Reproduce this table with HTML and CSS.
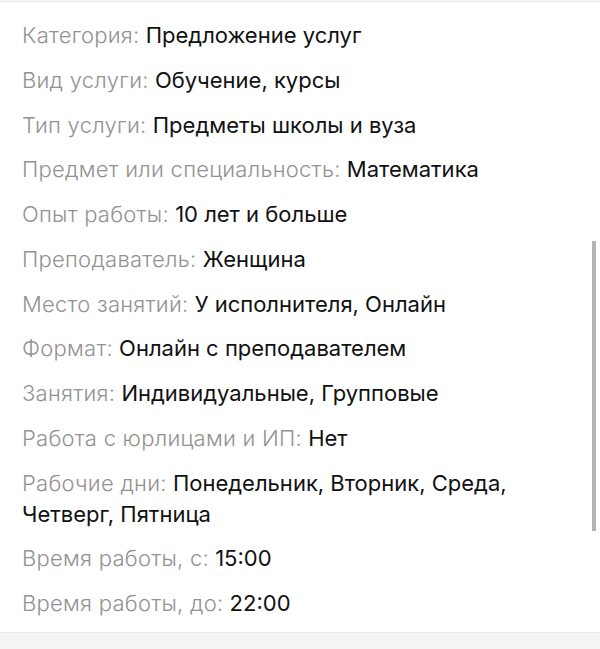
FILE: index.html
```html
<!DOCTYPE html>
<html lang="ru">
<head>
<meta charset="utf-8">
<link rel="stylesheet" href="styles.css">
</head>
<body>
<div class="card">
  <ul class="props">
    <li><span class="k">Категория:</span> <span class="v">Предложение услуг</span></li>
    <li><span class="k">Вид услуги:</span> <span class="v">Обучение, курсы</span></li>
    <li><span class="k">Тип услуги:</span> <span class="v">Предметы школы и вуза</span></li>
    <li><span class="k">Предмет или специальность:</span> <span class="v">Математика</span></li>
    <li><span class="k">Опыт работы:</span> <span class="v">10 лет и больше</span></li>
    <li><span class="k">Преподаватель:</span> <span class="v">Женщина</span></li>
    <li><span class="k">Место занятий:</span> <span class="v">У исполнителя, Онлайн</span></li>
    <li><span class="k">Формат:</span> <span class="v">Онлайн с преподавателем</span></li>
    <li><span class="k">Занятия:</span> <span class="v">Индивидуальные, Групповые</span></li>
    <li><span class="k">Работа с юрлицами и ИП:</span> <span class="v">Нет</span></li>
    <li><span class="k">Рабочие дни:</span> <span class="v">Понедельник, Вторник, Среда, Четверг, Пятница</span></li>
    <li><span class="k">Время работы, с:</span> <span class="v">15:00</span></li>
    <li><span class="k">Время работы, до:</span> <span class="v">22:00</span></li>
  </ul>
  <div class="scrollbar"></div>
</div>
</body>
</html>
```

FILE: styles.css
```css
html, body {
  margin: 0;
  padding: 0;
}
body {
  background: #f5f5f5;
  font-family: Inter, "Noto Sans", sans-serif;
  padding-top: 1px;
}
.card {
  position: relative;
  background: #fff;
  border-top: 1px solid #e9e9e9;
  border-bottom: 1px solid #ececec;
  height: 632px;
  box-sizing: border-box;
}
.props {
  list-style: none;
  margin: 0;
  padding: 18px 60px 0 22px;
  display: flex;
  flex-direction: column;
  gap: 13.75px;
}
.props li {
  font-size: 22px;
  line-height: 31px;
  color: #111;
}
.k {
  color: #929292;
  font-weight: 300;
  letter-spacing: 0.25px;
}
.v {
  color: #111;
}
.scrollbar {
  position: absolute;
  left: 592px;
  top: 239px;
  width: 4px;
  height: 290px;
  background: #b3b3b3;
}
```
